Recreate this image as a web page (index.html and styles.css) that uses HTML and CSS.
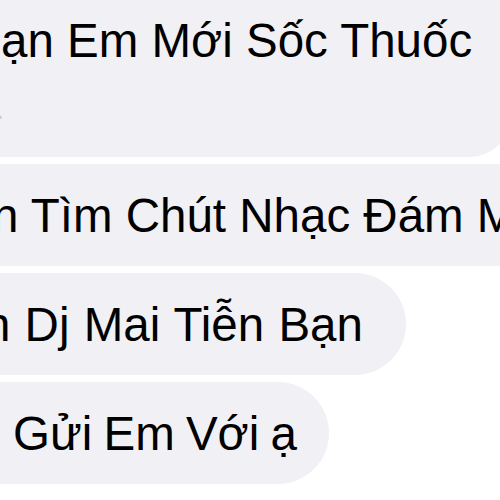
FILE: index.html
```html
<!DOCTYPE html>
<html lang="vi">
<head>
    <meta charset="UTF-8">
    <meta name="viewport" content="width=device-width, initial-scale=1.0">
    <title>Tin nhắn</title>
    <link rel="stylesheet" href="styles.css">
</head>
<body>
    <div class="thread">
        <div class="bubble bubble-first">
            <span class="line line-a">ạn Em Mới Sốc Thuốc</span>
            <span class="line line-b">ạ</span>
        </div>
        <div class="bubble bubble-wide">
            <span class="line line-c">n Tìm Chút Nhạc Đám Ma</span>
        </div>
        <div class="bubble bubble-mid">
            <span class="line line-d">n Dj Mai Tiễn Bạn</span>
        </div>
        <div class="bubble bubble-last">
            <span class="line line-e">Gửi Em Với ạ</span>
        </div>
    </div>
</body>
</html>
```

FILE: styles.css
```css
* {
    margin: 0;
    padding: 0;
    box-sizing: border-box;
}

body {
    background: #ffffff;
    font-family: "Liberation Sans", Arial, sans-serif;
    color: #000000;
    overflow: hidden;
    width: 500px;
    height: 500px;
}

.thread {
    display: flex;
    flex-direction: column;
    align-items: flex-start;
    gap: 7px;
    margin-top: -30px;
    margin-left: -60px;
}

.bubble {
    background: #f0f0f5;
    border-radius: 51px;
    padding: 21px 38px 19px 60px;
    font-size: 47.5px;
    line-height: 62px;
    white-space: nowrap;
}

.bubble-first {
    border-radius: 40px;
    padding-top: 40px;
    padding-bottom: 23px;
}

.bubble-wide {
    padding-right: 120px;
}

.bubble-mid {
    padding-right: 43px;
    word-spacing: 1px;
}

.bubble-last {
    padding-right: 32px;
    word-spacing: -2px;
}

.line {
    display: block;
}

.line-a {
    margin-left: 1px;
}

.line-b {
    margin-left: -25px;
    color: #c9c9cf;
}

.line-c {
    margin-left: -8px;
}

.line-d {
    margin-left: -16px;
}

.line-e {
    margin-left: 13px;
}
```
